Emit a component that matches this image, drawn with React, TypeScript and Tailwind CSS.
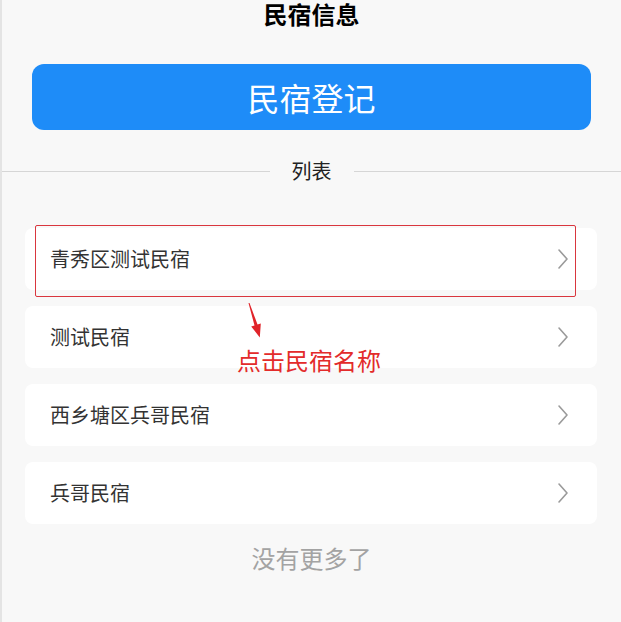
const homestays = ["青秀区测试民宿", "测试民宿", "西乡塘区兵哥民宿", "兵哥民宿"];

function Chevron() {
    return (
        <svg width="14" height="22" viewBox="0 0 14 22" fill="none">
            <path d="M3 2 L11 11 L3 20" stroke="#9a9a9a" strokeWidth="1.6" strokeLinecap="round" strokeLinejoin="round" />
        </svg>
    );
}

export default function App() {
    return (
        <div
            className="relative h-[622px] w-[621px] overflow-hidden border-l-2 border-[#e4e4e4] bg-[#f8f8f8]"
            style={{ fontFamily: '"Noto Sans CJK SC", "Noto Sans", sans-serif' }}
        >
            <div className="h-[28px] pt-[1px] text-center text-[24px] font-bold leading-[26px] text-black">
                民宿信息
            </div>

            <button className="mt-[36px] ml-[30px] flex h-[66px] w-[559px] items-center justify-center rounded-[12px] bg-[#1e8cf8] text-[32px] text-white">
                民宿登记
            </button>

            <div className="mt-[21px] flex h-[40px] items-center">
                <div className="h-px flex-1 bg-[#d6d6d6]" />
                <span className="px-[22px] text-[20px] text-[#222]">列表</span>
                <div className="h-px flex-1 bg-[#d6d6d6]" />
            </div>

            <div className="mt-[37px] ml-[23px] flex w-[572px] flex-col gap-[16px]">
                {homestays.map((name) => (
                    <div key={name} className="flex h-[62px] items-center justify-between rounded-[8px] bg-white pr-[27px] pl-[25px]">
                        <span className="text-[20px] text-[#333]">{name}</span>
                        <Chevron />
                    </div>
                ))}
            </div>

            <div className="mt-[16px] text-center text-[24px] text-[#a3a3a3]">没有更多了</div>

            {/* 标注 */}
            <div className="absolute top-[225px] left-[33px] h-[72px] w-[541px] rounded-[2px] border border-[#d9363e]" />
            <svg className="absolute top-[300px] left-[242px]" width="24" height="42" viewBox="0 0 24 42">
                <polygon points="4.5,3.1 5.5,2.9 13.5,24.6 16.8,23.6 15.8,37.5 7.2,26.4 10.5,25.4" fill="#e0242a" />
            </svg>
            <div className="absolute top-[344px] left-[235px] text-[24px] leading-[32px] text-[#e32b2b]">点击民宿名称</div>
        </div>
    );
}
